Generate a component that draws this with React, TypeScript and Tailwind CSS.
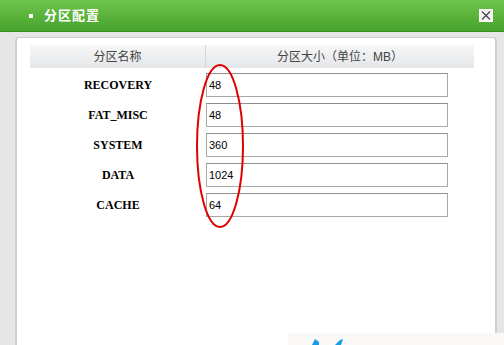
const rows = [
  { name: 'RECOVERY', size: '48' },
  { name: 'FAT_MISC', size: '48' },
  { name: 'SYSTEM', size: '360' },
  { name: 'DATA', size: '1024' },
  { name: 'CACHE', size: '64' },
];

export default function App() {
  return (
    <div
      className="relative w-[504px] h-[345px] overflow-hidden bg-[#e6e6e6]"
      style={{ fontFamily: '"Liberation Sans", "Noto Sans CJK SC", sans-serif' }}
    >
      {/* title bar */}
      <div className="h-[32px] flex items-center bg-gradient-to-b from-[#6fc44c] to-[#47a22b] border-b border-[#3b8a22]">
        <span className="ml-[29px] w-[4px] h-[4px] bg-white" />
        <span className="ml-[11px] text-[13px] font-bold text-white tracking-[1px]">分区配置</span>
        <button className="ml-auto mr-[11px] w-[14px] h-[13px] border border-white bg-[#f3f3f3] flex items-center justify-center">
          <svg width="10" height="9" viewBox="0 0 10 9">
            <path d="M1 0.5 L9 8.5 M9 0.5 L1 8.5" stroke="#444" strokeWidth="1.2" />
          </svg>
        </button>
      </div>

      {/* body */}
      <div className="flex h-[313px] pt-[5px] pl-[15px] pr-[7px]">
        <div className="flex-1 bg-white border-l-2 border-r-2 border-t border-[#cfcfcf] rounded-tl-[4px] rounded-tr-[4px] pt-[7px] pl-[13px]">
          <div className="w-[444px]">
            <div className="flex h-[23px] bg-gradient-to-b from-[#f7f7f7] to-[#e4e6e9] text-[12px] text-[#444]">
              <div className="w-[176px] flex items-center justify-center border-r border-[#d6d6d6]">分区名称</div>
              <div className="flex-1 flex items-center justify-center">分区大小（单位：MB）</div>
            </div>
            <div className="pt-[2px]">
              {rows.map((r) => (
                <div key={r.name} className="flex h-[30px] items-center">
                  <div
                    className="w-[176px] text-center text-[12px] font-bold text-black"
                    style={{ fontFamily: '"Liberation Serif", serif' }}
                  >
                    {r.name}
                  </div>
                  <input
                    readOnly
                    value={r.size}
                    className="w-[242px] h-[24px] border border-[#a8a8a8] border-t-[#8e8e8e] px-[2px] text-[11px] text-black outline-none"
                  />
                </div>
              ))}
            </div>
          </div>
        </div>
      </div>

      {/* red annotation ellipse */}
      <svg className="absolute left-0 top-0 pointer-events-none" width="504" height="345">
        <ellipse cx="220" cy="146" rx="23" ry="81" fill="none" stroke="#e00000" strokeWidth="2" />
      </svg>

      {/* partial overlay at the bottom */}
      <div className="absolute left-[288px] top-[333px] w-[216px] h-[12px] bg-[#fbf9f7]">
        <svg width="60" height="12" className="absolute left-[20px] top-0">
          <path d="M4 12 L7 6 L11 9 L11 12 Z" fill="#1a9be8" />
          <path d="M27 12 L32 7 L35 6 L33 12 Z" fill="#1a9be8" />
        </svg>
      </div>
    </div>
  );
}
